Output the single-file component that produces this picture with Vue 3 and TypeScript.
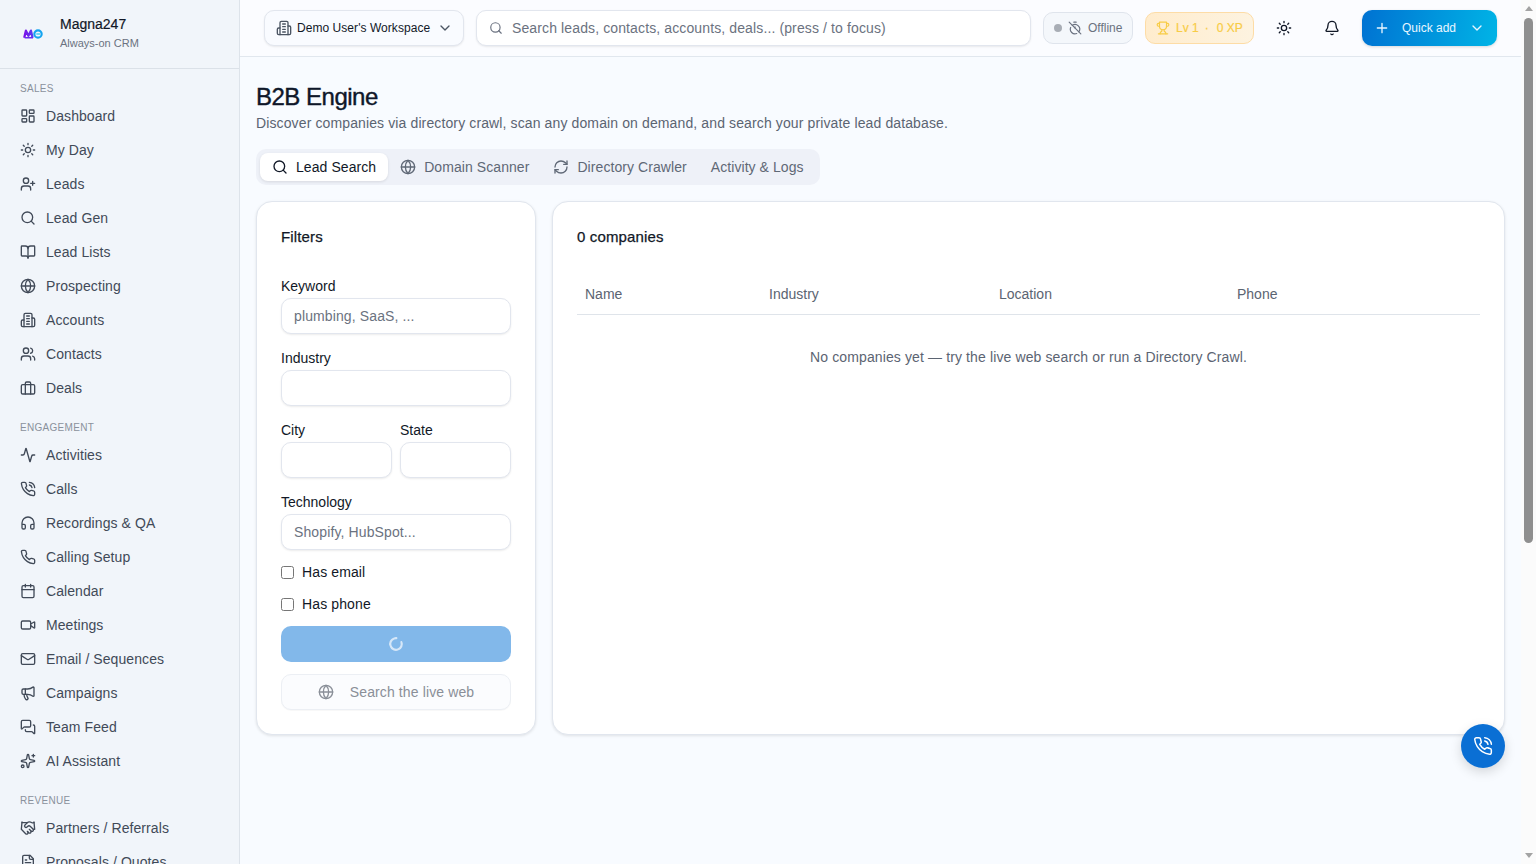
<script setup lang="ts">
const icons: Record<string, string> = {
  dashboard: '<rect x="3" y="3" width="7" height="9" rx="1"/><rect x="14" y="3" width="7" height="5" rx="1"/><rect x="14" y="12" width="7" height="9" rx="1"/><rect x="3" y="16" width="7" height="5" rx="1"/>',
  sun: '<circle cx="12" cy="12" r="4"/><path d="M12 2v2M12 20v2M4.93 4.93l1.41 1.41M17.66 17.66l1.41 1.41M2 12h2M20 12h2M6.34 17.66l-1.41 1.41M19.07 4.93l-1.41 1.41"/>',
  userPlus: '<path d="M16 21v-2a4 4 0 0 0-4-4H6a4 4 0 0 0-4 4v2"/><circle cx="9" cy="7" r="4"/><path d="M19 8v6M22 11h-6"/>',
  search: '<circle cx="11" cy="11" r="8"/><path d="m21 21-4.3-4.3"/>',
  book: '<path d="M12 7v14"/><path d="M3 18a1 1 0 0 1-1-1V4a1 1 0 0 1 1-1h5a4 4 0 0 1 4 4 4 4 0 0 1 4-4h5a1 1 0 0 1 1 1v13a1 1 0 0 1-1 1h-6a3 3 0 0 0-3 3 3 3 0 0 0-3-3z"/>',
  globe: '<circle cx="12" cy="12" r="10"/><path d="M12 2a14.5 14.5 0 0 0 0 20 14.5 14.5 0 0 0 0-20"/><path d="M2 12h20"/>',
  building: '<path d="M6 22V4a2 2 0 0 1 2-2h8a2 2 0 0 1 2 2v18Z"/><path d="M6 12H4a2 2 0 0 0-2 2v6a2 2 0 0 0 2 2h2"/><path d="M18 9h2a2 2 0 0 1 2 2v9a2 2 0 0 1-2 2h-2"/><path d="M10 6h4M10 10h4M10 14h4M10 18h4"/>',
  users: '<path d="M16 21v-2a4 4 0 0 0-4-4H6a4 4 0 0 0-4 4v2"/><circle cx="9" cy="7" r="4"/><path d="M22 21v-2a4 4 0 0 0-3-3.87"/><path d="M16 3.13a4 4 0 0 1 0 7.75"/>',
  briefcase: '<rect x="2" y="7" width="20" height="14" rx="2"/><path d="M16 21V5a2 2 0 0 0-2-2h-4a2 2 0 0 0-2 2v16"/>',
  activity: '<path d="M22 12h-2.48a2 2 0 0 0-1.93 1.46l-2.35 8.36a.25.25 0 0 1-.48 0L9.24 2.18a.25.25 0 0 0-.48 0l-2.35 8.36A2 2 0 0 1 4.49 12H2"/>',
  phoneCall: '<path d="M22 16.92v3a2 2 0 0 1-2.18 2 19.79 19.79 0 0 1-8.63-3.07 19.5 19.5 0 0 1-6-6 19.79 19.79 0 0 1-3.07-8.67A2 2 0 0 1 4.11 2h3a2 2 0 0 1 2 1.72 12.84 12.84 0 0 0 .7 2.81 2 2 0 0 1-.45 2.11L8.09 9.91a16 16 0 0 0 6 6l1.27-1.27a2 2 0 0 1 2.11-.45 12.84 12.84 0 0 0 2.81.7A2 2 0 0 1 22 16.92z"/><path d="M14.05 2a9 9 0 0 1 8 7.94"/><path d="M14.05 6A5 5 0 0 1 18 10"/>',
  headphones: '<path d="M3 14h3a2 2 0 0 1 2 2v3a2 2 0 0 1-2 2H5a2 2 0 0 1-2-2v-7a9 9 0 0 1 18 0v7a2 2 0 0 1-2 2h-1a2 2 0 0 1-2-2v-3a2 2 0 0 1 2-2h3"/>',
  phone: '<path d="M22 16.92v3a2 2 0 0 1-2.18 2 19.79 19.79 0 0 1-8.63-3.07 19.5 19.5 0 0 1-6-6 19.79 19.79 0 0 1-3.07-8.67A2 2 0 0 1 4.11 2h3a2 2 0 0 1 2 1.72 12.84 12.84 0 0 0 .7 2.81 2 2 0 0 1-.45 2.11L8.09 9.91a16 16 0 0 0 6 6l1.27-1.27a2 2 0 0 1 2.11-.45 12.84 12.84 0 0 0 2.81.7A2 2 0 0 1 22 16.92z"/>',
  calendar: '<path d="M8 2v4M16 2v4"/><rect x="3" y="4" width="18" height="18" rx="2"/><path d="M3 10h18"/>',
  video: '<path d="m16 13 5.223 3.482a.5.5 0 0 0 .777-.416V7.87a.5.5 0 0 0-.752-.432L16 10.5"/><rect x="2" y="6" width="14" height="12" rx="2"/>',
  mail: '<path d="m22 7-8.991 5.727a2 2 0 0 1-2.009 0L2 7"/><rect x="2" y="4" width="20" height="16" rx="2"/>',
  megaphone: '<path d="M11 6a13 13 0 0 0 8.4-2.8A1 1 0 0 1 21 4v12a1 1 0 0 1-1.6.8A13 13 0 0 0 11 14H5a2 2 0 0 1-2-2V8a2 2 0 0 1 2-2z"/><path d="M6 14a12 12 0 0 0 2.4 7.2 2 2 0 0 0 3.2-2.4A8 8 0 0 1 10 14"/><path d="M8 6v8"/>',
  messages: '<path d="M16 10a2 2 0 0 1-2 2H6.828a2 2 0 0 0-1.414.586l-2.202 2.202A.71.71 0 0 1 2 14.286V4a2 2 0 0 1 2-2h10a2 2 0 0 1 2 2z"/><path d="M20 9a2 2 0 0 1 2 2v10.286a.71.71 0 0 1-1.212.502l-2.202-2.202A2 2 0 0 0 17.172 19H10a2 2 0 0 1-2-2v-1"/>',
  sparkles: '<path d="M11.017 2.814a1 1 0 0 1 1.966 0l1.051 5.558a2 2 0 0 0 1.594 1.594l5.558 1.051a1 1 0 0 1 0 1.966l-5.558 1.051a2 2 0 0 0-1.594 1.594l-1.051 5.558a1 1 0 0 1-1.966 0l-1.051-5.558a2 2 0 0 0-1.594-1.594l-5.558-1.051a1 1 0 0 1 0-1.966l5.558-1.051a2 2 0 0 0 1.594-1.594z"/><path d="M20 2v4M22 4h-4"/><circle cx="4" cy="20" r="2"/>',
  handshake: '<path d="m11 17 2 2a1 1 0 1 0 3-3"/><path d="m14 14 2.5 2.5a1 1 0 1 0 3-3l-3.88-3.88a3 3 0 0 0-4.24 0l-.88.88a1 1 0 1 1-3-3l2.81-2.81a5.79 5.79 0 0 1 7.06-.87l.47.28a2 2 0 0 0 1.42.25L21 4"/><path d="m21 3 1 11h-2"/><path d="M3 3 2 14l6.5 6.5a1 1 0 1 0 3-3"/><path d="M3 4h8"/>',
  file: '<path d="M15 2H6a2 2 0 0 0-2 2v16a2 2 0 0 0 2 2h12a2 2 0 0 0 2-2V7Z"/><path d="M14 2v4a2 2 0 0 0 2 2h4"/><path d="M10 9H8M16 13H8M16 17H8"/>',
  refresh: '<path d="M3 12a9 9 0 0 1 9-9 9.75 9.75 0 0 1 6.74 2.74L21 8"/><path d="M21 3v5h-5"/><path d="M21 12a9 9 0 0 1-9 9 9.75 9.75 0 0 1-6.74-2.74L3 16"/><path d="M8 16H3v5"/>',
  trophy: '<path d="M6 9H4.5a2.5 2.5 0 0 1 0-5H6"/><path d="M18 9h1.5a2.5 2.5 0 0 0 0-5H18"/><path d="M4 22h16"/><path d="M10 14.66V17c0 .55-.47.98-.97 1.21C7.85 18.75 7 20.24 7 22"/><path d="M14 14.66V17c0 .55.47.98.97 1.21C16.15 18.75 17 20.24 17 22"/><path d="M18 2H6v7a6 6 0 0 0 12 0V2Z"/>',
  bell: '<path d="M10.268 21a2 2 0 0 0 3.464 0"/><path d="M3.262 15.326A1 1 0 0 0 4 17h16a1 1 0 0 0 .74-1.673C19.41 13.956 18 12.499 18 8A6 6 0 0 0 6 8c0 4.499-1.411 5.956-2.738 7.326"/>',
  timerOff: '<path d="M10 2h4"/><path d="M4.6 11a8 8 0 0 0 1.7 8.7 8 8 0 0 0 8.7 1.7"/><path d="M7.4 7.4a8 8 0 0 1 10.3 1 8 8 0 0 1 .9 10.2"/><path d="m2 2 20 20"/><path d="M12 12v-2"/>',
  chevron: '<path d="m6 9 6 6 6-6"/>',
  plus: '<path d="M5 12h14M12 5v14"/>',
}

const navGroups = [
  { label: 'Sales', items: [
    { name: 'Dashboard', icon: 'dashboard' },
    { name: 'My Day', icon: 'sun' },
    { name: 'Leads', icon: 'userPlus' },
    { name: 'Lead Gen', icon: 'search' },
    { name: 'Lead Lists', icon: 'book' },
    { name: 'Prospecting', icon: 'globe' },
    { name: 'Accounts', icon: 'building' },
    { name: 'Contacts', icon: 'users' },
    { name: 'Deals', icon: 'briefcase' },
  ] },
  { label: 'Engagement', items: [
    { name: 'Activities', icon: 'activity' },
    { name: 'Calls', icon: 'phoneCall' },
    { name: 'Recordings & QA', icon: 'headphones' },
    { name: 'Calling Setup', icon: 'phone' },
    { name: 'Calendar', icon: 'calendar' },
    { name: 'Meetings', icon: 'video' },
    { name: 'Email / Sequences', icon: 'mail' },
    { name: 'Campaigns', icon: 'megaphone' },
    { name: 'Team Feed', icon: 'messages' },
    { name: 'AI Assistant', icon: 'sparkles' },
  ] },
  { label: 'Revenue', items: [
    { name: 'Partners / Referrals', icon: 'handshake' },
    { name: 'Proposals / Quotes', icon: 'file' },
  ] },
]

const tabs = [
  { name: 'Lead Search', icon: 'search', active: true },
  { name: 'Domain Scanner', icon: 'globe' },
  { name: 'Directory Crawler', icon: 'refresh' },
  { name: 'Activity & Logs', icon: '' },
]

const columns = ['Name', 'Industry', 'Location', 'Phone']
</script>

<template>
  <div class="shell">
    <aside class="sidebar">
      <div class="brand">
        <svg class="logo" viewBox="0 0 24 12" width="20" height="10">
          <defs>
            <linearGradient id="logo-m" x1="0" y1="0" x2="1" y2="0">
              <stop offset="0" stop-color="#7a10e8" />
              <stop offset="1" stop-color="#5b3df0" />
            </linearGradient>
          </defs>
          <path d="M1.5 10.5 3.5 2 6.5 8 9.5 2l2 8.5" fill="none" stroke="url(#logo-m)" stroke-width="2.8" stroke-linejoin="round" />
          <path d="M2 10.5h10" stroke="#6a2cf0" stroke-width="1.8" />
          <circle cx="18" cy="6" r="4.4" fill="none" stroke="#14a4f0" stroke-width="2.6" />
          <path d="M16 6h4.5" stroke="#0fc3f2" stroke-width="1.4" />
        </svg>
        <div>
          <div class="brand-name">Magna247</div>
          <div class="brand-sub">Always-on CRM</div>
        </div>
      </div>
      <nav class="nav">
        <section v-for="group in navGroups" :key="group.label" class="nav-group">
          <div class="nav-label">{{ group.label }}</div>
          <a v-for="item in group.items" :key="item.name" class="nav-item">
            <svg class="icon" viewBox="0 0 24 24" v-html="icons[item.icon]" />
            <span>{{ item.name }}</span>
          </a>
        </section>
      </nav>
    </aside>

    <div class="main">
      <header class="topbar">
        <button class="workspace">
          <svg class="icon" viewBox="0 0 24 24" v-html="icons.building" />
          <span>Demo User's Workspace</span>
          <svg class="icon chev" viewBox="0 0 24 24" v-html="icons.chevron" />
        </button>
        <label class="global-search">
          <svg class="icon" viewBox="0 0 24 24" v-html="icons.search" />
          <input placeholder="Search leads, contacts, accounts, deals... (press / to focus)" />
        </label>
        <div class="status">
          <i class="dot"></i>
          <svg class="icon" viewBox="0 0 24 24" v-html="icons.timerOff" />
          <span>Offline</span>
        </div>
        <div class="xp">
          <svg class="icon" viewBox="0 0 24 24" v-html="icons.trophy" />
          <span>Lv 1</span>
          <span class="xp-sep">·</span>
          <span>0 XP</span>
        </div>
        <button class="icon-btn"><svg class="icon" viewBox="0 0 24 24" v-html="icons.sun" /></button>
        <button class="icon-btn"><svg class="icon" viewBox="0 0 24 24" v-html="icons.bell" /></button>
        <button class="quick-add">
          <svg class="icon" viewBox="0 0 24 24" v-html="icons.plus" />
          <span>Quick add</span>
          <svg class="icon" viewBox="0 0 24 24" v-html="icons.chevron" />
        </button>
      </header>

      <main class="content">
        <h1>B2B Engine</h1>
        <p class="subtitle">Discover companies via directory crawl, scan any domain on demand, and search your private lead database.</p>

        <div class="tabs">
          <button v-for="tab in tabs" :key="tab.name" class="tab" :class="{ active: tab.active }">
            <svg v-if="tab.icon" class="icon" viewBox="0 0 24 24" v-html="icons[tab.icon]" />
            {{ tab.name }}
          </button>
        </div>

        <div class="columns">
          <form class="card filters" @submit.prevent>
            <h2>Filters</h2>
            <div class="field first">
              <label>Keyword</label>
              <input placeholder="plumbing, SaaS, ..." />
            </div>
            <div class="field">
              <label>Industry</label>
              <input />
            </div>
            <div class="field-row">
              <div class="field">
                <label>City</label>
                <input />
              </div>
              <div class="field">
                <label>State</label>
                <input />
              </div>
            </div>
            <div class="field">
              <label>Technology</label>
              <input placeholder="Shopify, HubSpot..." />
            </div>
            <label class="check"><input type="checkbox" /> Has email</label>
            <label class="check"><input type="checkbox" /> Has phone</label>
            <button class="btn-search" disabled>
              <svg class="spinner" viewBox="0 0 14 14" width="14" height="14">
                <circle cx="7" cy="7" r="5.8" fill="none" stroke-width="2.2" stroke-dasharray="29 36.5" stroke-linecap="round" />
              </svg>
            </button>
            <button class="btn-web" disabled>
              <svg class="icon" viewBox="0 0 24 24" v-html="icons.globe" />
              Search the live web
            </button>
          </form>

          <section class="card results">
            <h2>0 companies</h2>
            <table>
              <thead>
                <tr>
                  <th v-for="col in columns" :key="col">{{ col }}</th>
                </tr>
              </thead>
              <tbody>
                <tr>
                  <td :colspan="columns.length">No companies yet — try the live web search or run a Directory Crawl.</td>
                </tr>
              </tbody>
            </table>
          </section>
        </div>
      </main>
    </div>

    <div class="scrollbar" aria-hidden="true">
      <i class="arrow up"></i>
      <i class="thumb"></i>
      <i class="arrow down"></i>
    </div>

    <button class="fab"><svg class="icon" viewBox="0 0 24 24" v-html="icons.phoneCall" /></button>
  </div>
</template>

<style>
html, body { margin: 0; background: #f8fbff; }
</style>

<style scoped>
.shell {
  display: flex; height: 100vh; overflow: hidden; background: #f8fbff; color: #111827;
  font-family: "Liberation Sans", Arial, sans-serif; font-size: 14px; letter-spacing: 0.12px;
}
button, input { letter-spacing: inherit; }
.icon {
  width: 16px; height: 16px; flex: none; fill: none; stroke: currentColor;
  stroke-width: 2; stroke-linecap: round; stroke-linejoin: round;
}

.sidebar {
  width: 240px; height: 100vh; flex: none; box-sizing: border-box;
  background: #f1f5fa; border-right: 1px solid #dde3ea; display: flex; flex-direction: column; overflow: hidden;
}
.brand { height: 69px; flex: none; box-sizing: border-box; display: flex; align-items: center; gap: 17px; padding: 0 0 3px 23px; border-bottom: 1px solid #dbe1e8; }
.logo { flex: none; margin-top: 3px; }
.brand-name { font-size: 14px; font-weight: 500; line-height: 20px; color: #111827; -webkit-text-stroke: 0.2px; letter-spacing: 0; }
.brand-sub { font-size: 11px; line-height: 16px; color: #6b7280; margin-top: 1px; letter-spacing: 0; }
.nav { padding-top: 13px; }
.nav-group { margin-bottom: 16px; }
.nav-label { font-size: 10px; line-height: 14px; letter-spacing: 0.3px; text-transform: uppercase; color: #8a919c; padding: 0 20px; margin-bottom: 3px; font-weight: 500; }
.nav-item { display: flex; align-items: center; gap: 10px; height: 34px; padding: 0 20px; color: #414a58; font-size: 14px; letter-spacing: 0.08px; }

.main { flex: 1; min-width: 0; }
.topbar {
  height: 57px; box-sizing: border-box; display: flex; align-items: center; gap: 12px;
  padding: 0 24px; background: #fbfcff; border-bottom: 1px solid #e1e7ee;
}
.workspace {
  height: 36px; width: 200px; flex: none; display: flex; align-items: center; gap: 5px; padding: 0 10px 0 11px; box-sizing: border-box;
  background: #f9fbff; border: 1px solid #e2e6ee; border-radius: 10px; box-shadow: 0 1px 2px rgba(0,0,0,.08);
  font: inherit; font-size: 12px; letter-spacing: 0.05px; color: #111827; white-space: nowrap;
}
.workspace .chev { margin-left: auto; color: #4b5563; }
.workspace .icon:first-child { color: #4b5563; }
.global-search {
  flex: 1; height: 36px; min-width: 0; display: flex; align-items: center; gap: 7px; padding: 0 12px; box-sizing: border-box;
  background: #fff; border: 1px solid #e2e6ee; border-radius: 10px; box-shadow: 0 1px 2px rgba(0,0,0,.08); color: #6b7280;
}
.global-search .icon { width: 14px; height: 14px; }
.global-search input { flex: 1; min-width: 0; border: 0; outline: 0; background: none; font: inherit; letter-spacing: inherit; color: #111827; }
.global-search input::placeholder { color: #6b7280; opacity: 1; }
.status {
  height: 32px; width: 90px; flex: none; box-sizing: border-box; display: flex; align-items: center; gap: 6px; padding: 0 10px;
  background: #f4f7fb; border: 1px solid #dfe4ec; border-radius: 10px; font-size: 12px; letter-spacing: 0; color: #6b7280;
}
.status .dot { width: 8px; height: 8px; flex: none; border-radius: 50%; background: #a8adb5; }
.status .icon { width: 14px; height: 14px; }
.xp {
  height: 32px; width: 109px; flex: none; box-sizing: border-box; display: flex; align-items: center; gap: 6px; padding: 0 10px;
  background: linear-gradient(90deg, #ffeccd, #fdf3e0); border: 1px solid #fddca6; border-radius: 10px;
  font-size: 12px; font-weight: 500; letter-spacing: 0; color: #f8cc45; white-space: nowrap; -webkit-text-stroke: 0.2px;
}
.xp .icon { width: 14px; height: 14px; }
.xp-sep { margin-right: 2px; }
.icon-btn { width: 36px; height: 36px; flex: none; border: 0; background: none; padding: 0; display: flex; align-items: center; justify-content: center; color: #111827; }
.quick-add {
  height: 36px; width: 135px; flex: none; box-sizing: border-box; display: flex; align-items: center; gap: 10px; padding: 0 12px;
  border: 0; border-radius: 10px; color: #e8f6ff; font: inherit; font-size: 12px; letter-spacing: 0; font-weight: 500;
  background: linear-gradient(100deg, #0072d2, #00b4e6); box-shadow: 0 1px 3px rgba(0,0,0,.15);
}
.quick-add span { flex: 1; text-align: left; padding-left: 2px; }

.content { padding: 24px 16px 0; }
h1 { margin: 0; font-size: 24px; line-height: 32px; font-weight: 500; letter-spacing: -0.5px; color: #0f172a; -webkit-text-stroke: 0.4px; }
.subtitle { margin: 0; font-size: 14px; line-height: 20px; color: #5b6472; }
.tabs { display: inline-flex; align-items: center; height: 36px; margin-top: 16px; padding: 0 4px; gap: 0; background: #eef1f8; border-radius: 10px; vertical-align: top; }
.tab { height: 28px; display: flex; align-items: center; gap: 8px; padding: 0 12px; border: 0; background: none; border-radius: 8px; font: inherit; letter-spacing: 0.07px; font-size: 14px; color: #5f6876; }
.tab.active { background: #fff; color: #111827; box-shadow: 0 1px 3px rgba(0,0,0,.1); }

.columns { display: grid; grid-template-columns: 280px 1fr; gap: 16px; margin-top: 16px; align-items: stretch; }
.card { background: #fff; border: 1px solid #e1e6ee; border-radius: 16px; box-shadow: 0 1px 3px rgba(0,0,0,.1); box-sizing: border-box; padding: 24px; height: 534px; }
h2 { margin: 0; font-size: 15px; line-height: 22px; font-weight: 500; color: #111827; letter-spacing: 0.15px; -webkit-text-stroke: 0.25px; }

.filters { display: flex; flex-direction: column; gap: 0; }
.field { display: flex; flex-direction: column; margin-top: 14px; min-width: 0; }
.field.first { margin-top: 28px; }
.field label { font-size: 14px; line-height: 20px; margin-bottom: 2px; color: #111827; letter-spacing: 0; }
.field input {
  height: 36px; width: 100%; box-sizing: border-box; padding: 0 12px; background: #fff; border: 1px solid #e2e6ee; border-radius: 10px;
  box-shadow: 0 1px 2px rgba(0,0,0,.08); font: inherit; letter-spacing: inherit; outline: 0;
}
.field input::placeholder { color: #6b7280; opacity: 1; }
.field-row { display: grid; grid-template-columns: 1fr 1fr; gap: 8px; }
.check { display: flex; align-items: center; gap: 8px; height: 20px; margin-top: 12px; font-size: 14px; color: #111827; }
.check input { width: 13px; height: 13px; margin: 0; }
.btn-search { height: 36px; flex: none; margin-top: 12px; border: 0; border-radius: 10px; background: #82b8ea; display: flex; align-items: center; justify-content: center; padding: 0; }
.spinner { transform: rotate(-20deg); stroke: #d6e7f8; }
.btn-web {
  height: 36px; flex: none; margin-top: 12px; box-sizing: border-box; display: flex; align-items: center; justify-content: center; gap: 16px;
  background: #fbfcfe; border: 1px solid #eceff4; border-radius: 10px; font: inherit; letter-spacing: inherit; font-size: 14px; color: #8a8f98; box-shadow: 0 1px 1px rgba(0,0,0,.03);
}

table { width: 100%; border-collapse: collapse; margin-top: 26px; table-layout: fixed; }
th { height: 40px; padding: 0 8px; text-align: left; font-weight: 400; font-size: 14px; letter-spacing: 0; color: #5b6472; border-bottom: 1px solid #dfe4ea; }
th:nth-child(1) { width: 168px; }
th:nth-child(2) { width: 214px; }
th:nth-child(3) { width: 222px; }
td { padding: 32px 8px 0; text-align: center; color: #5b6472; font-size: 14px; line-height: 20px; }

.scrollbar { width: 15px; flex: none; background: #fbfbfb; display: flex; flex-direction: column; align-items: center; }
.arrow { width: 0; height: 0; flex: none; border-left: 4px solid transparent; border-right: 4px solid transparent; }
.arrow.up { margin-top: 6px; border-bottom: 5px solid #a3a3a3; }
.arrow.down { margin-top: auto; margin-bottom: 6px; border-top: 5px solid #a3a3a3; }
.thumb { width: 9px; height: 525px; margin-top: 7px; border-radius: 5px; background: #8f8f8f; flex: none; }

.fab {
  position: fixed; right: 31px; bottom: 96px; width: 44px; height: 44px; border: 0; border-radius: 50%; padding: 0; z-index: 10;
  display: flex; align-items: center; justify-content: center; background: #0a6fd4; color: #fff; box-shadow: 0 4px 12px rgba(0,0,0,.15);
}
.fab .icon { width: 20px; height: 20px; stroke-width: 1.8; }
</style>
